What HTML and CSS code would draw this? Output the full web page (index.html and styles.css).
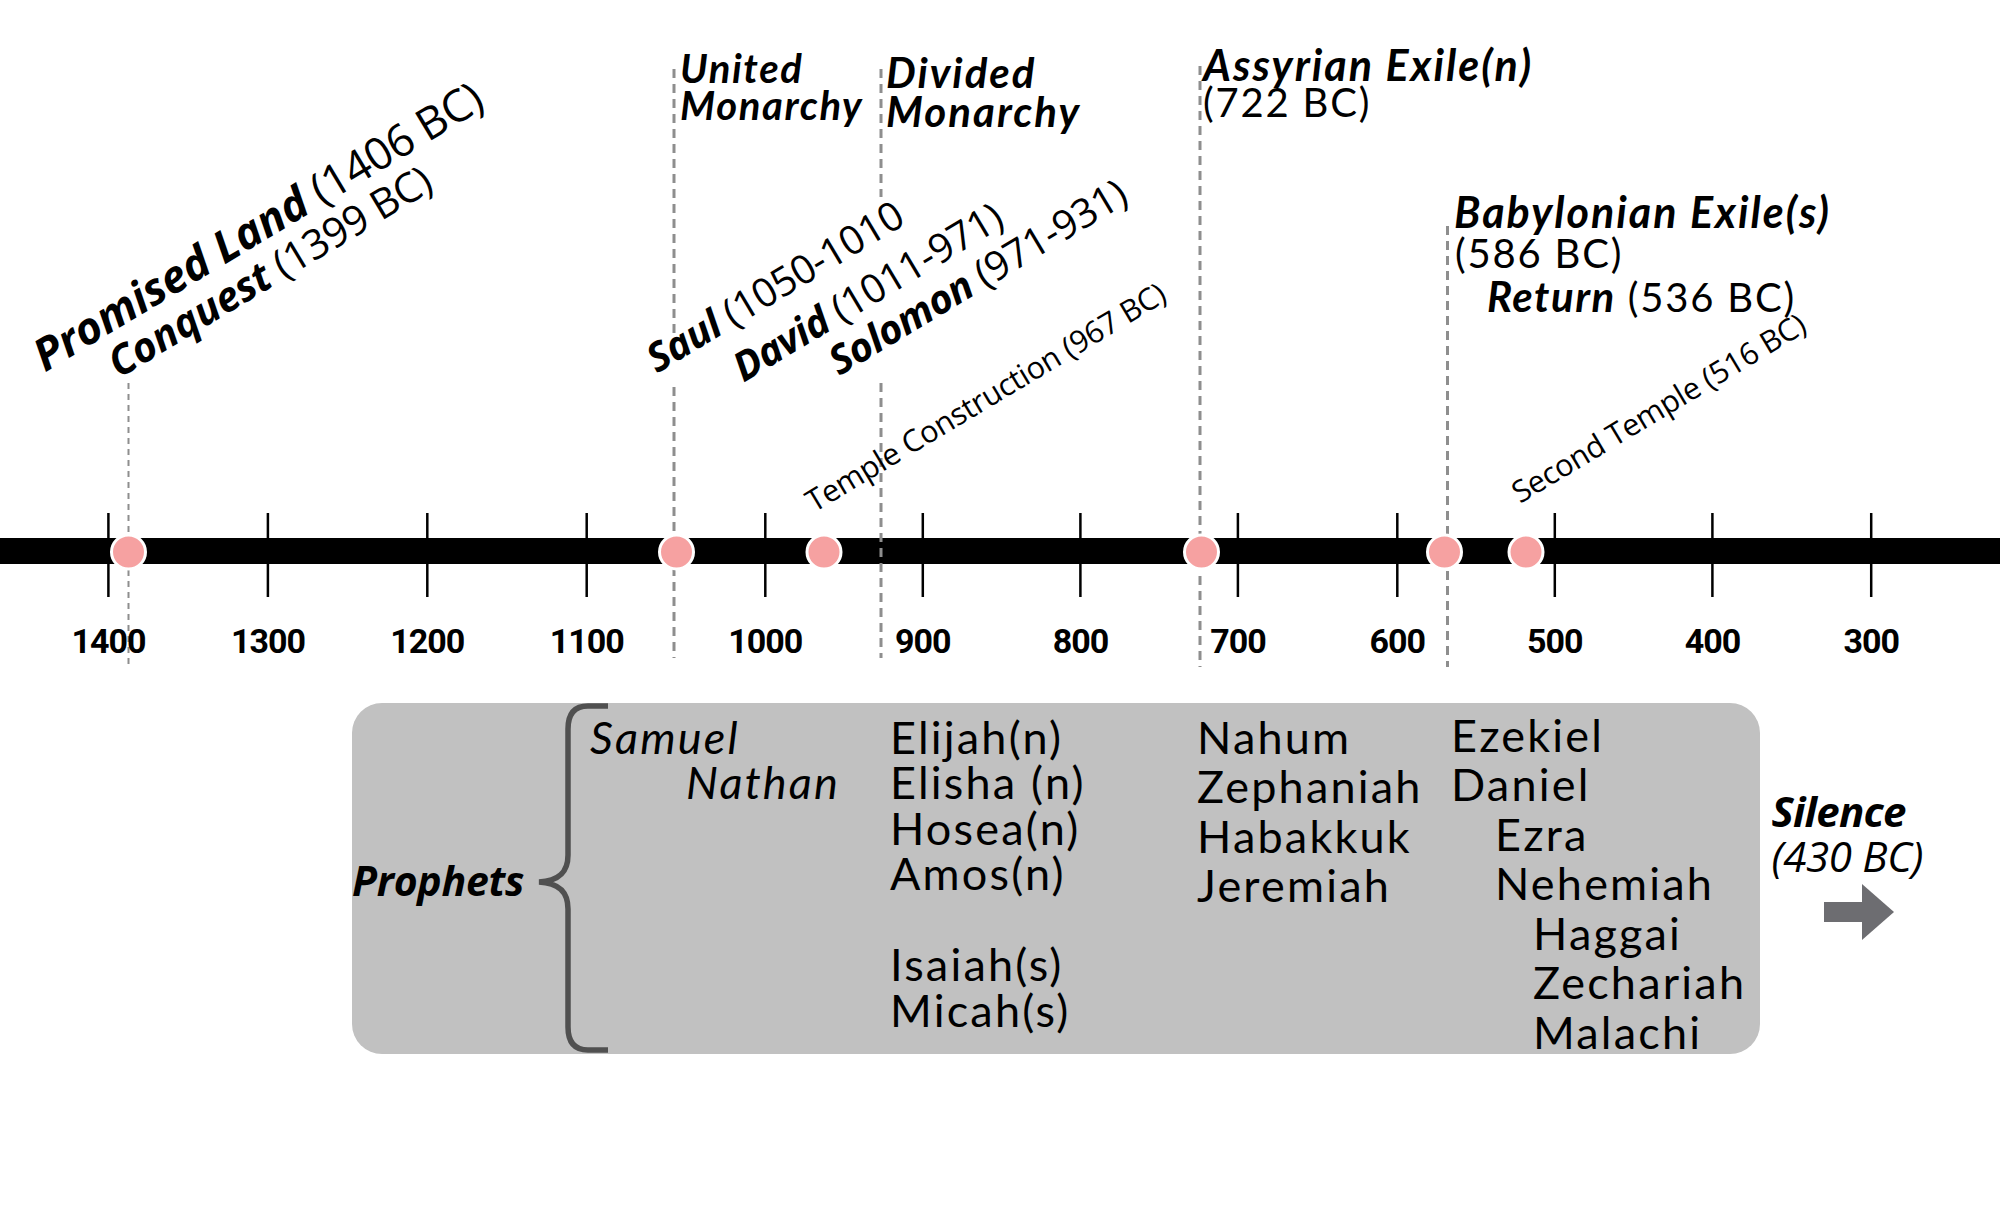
FILE: index.html
```html
<!DOCTYPE html>
<html lang="en">
<head>
<meta charset="utf-8">
<title>Old Testament Timeline</title>
<link rel="stylesheet" href="styles.css">
</head>
<body>
<main class="page">
  <svg class="chart" width="2000" height="703" viewBox="0 0 2000 703">
    <rect class="axis" x="0" y="538" width="2000" height="26"/>
    <g class="ticks">
      <line x1="108.4" y1="513" x2="108.4" y2="597"/>
      <line x1="267.9" y1="513" x2="267.9" y2="597"/>
      <line x1="427.3" y1="513" x2="427.3" y2="597"/>
      <line x1="586.7" y1="513" x2="586.7" y2="597"/>
      <line x1="765.3" y1="513" x2="765.3" y2="597"/>
      <line x1="922.8" y1="513" x2="922.8" y2="597"/>
      <line x1="1080.4" y1="513" x2="1080.4" y2="597"/>
      <line x1="1237.9" y1="513" x2="1237.9" y2="597"/>
      <line x1="1397.3" y1="513" x2="1397.3" y2="597"/>
      <line x1="1554.8" y1="513" x2="1554.8" y2="597"/>
      <line x1="1712.4" y1="513" x2="1712.4" y2="597"/>
      <line x1="1871.2" y1="513" x2="1871.2" y2="597"/>
    </g>
    <g class="guides">
      <line class="guide-thin" x1="128.5" y1="383" x2="128.5" y2="667"/>
      <line x1="674" y1="69" x2="674" y2="340"/>
      <line x1="674" y1="387" x2="674" y2="658"/>
      <line x1="881" y1="69" x2="881" y2="197"/>
      <line x1="881" y1="383" x2="881" y2="658"/>
      <line x1="1200" y1="66" x2="1200" y2="667"/>
      <line x1="1447.5" y1="226" x2="1447.5" y2="667"/>
    </g>
    <g class="dots">
      <circle cx="128.5" cy="552" r="17"/>
      <circle cx="676.5" cy="552" r="17"/>
      <circle cx="824" cy="552" r="17"/>
      <circle cx="1201.5" cy="552" r="17"/>
      <circle cx="1444.5" cy="552" r="17"/>
      <circle cx="1526" cy="552" r="17"/>
    </g>
    <g class="years">
      <text x="108.4" y="653">1400</text>
      <text x="267.9" y="653">1300</text>
      <text x="427.3" y="653">1200</text>
      <text x="586.7" y="653">1100</text>
      <text x="765.3" y="653">1000</text>
      <text x="922.8" y="653">900</text>
      <text x="1080.4" y="653">800</text>
      <text x="1237.9" y="653">700</text>
      <text x="1397.3" y="653">600</text>
      <text x="1554.8" y="653">500</text>
      <text x="1712.4" y="653">400</text>
      <text x="1871.2" y="653">300</text>
    </g>

    <g class="rotated">
      <text transform="translate(45 372.4) rotate(-31)"><tspan class="rb rb-p">Promised Land</tspan><tspan class="rl rl-p"> (1406 BC)</tspan></text>
      <text transform="translate(119 378.8) rotate(-31)"><tspan class="rb rb-c">Conquest</tspan><tspan class="rl rl-c"> (1399 BC)</tspan></text>
      <text transform="translate(657 373.7) rotate(-31)"><tspan class="rb rb-k">Saul</tspan><tspan class="rl rl-k"> (1050-1010</tspan></text>
      <text transform="translate(743.6 382.7) rotate(-31)"><tspan class="rb rb-k">David</tspan><tspan class="rl rl-k"> (1011-971)</tspan></text>
      <text transform="translate(839.3 376.3) rotate(-31)"><tspan class="rb rb-k">Solomon</tspan><tspan class="rl rl-k"> (971-931)</tspan></text>
      <text class="rt" transform="translate(814 513) rotate(-31)">Temple Construction (967 BC)</text>
      <text class="rt" transform="translate(1520 504) rotate(-31)">Second Temple (516 BC)</text>
    </g>

    <g class="headers">
      <text class="hd hd-sm" x="680" y="83">United</text>
      <text class="hd hd-sm" x="680" y="120">Monarchy</text>
      <text class="hd hd-md" x="886" y="88">Divided</text>
      <text class="hd hd-md" x="886" y="127">Monarchy</text>
      <text class="hd" x="1203" y="80.5">Assyrian Exile(n)</text>
      <text class="hd-date" x="1203" y="117">(722 BC)</text>
      <text class="hd" x="1454" y="228">Babylonian Exile(s)</text>
      <text class="hd-date" x="1455" y="268">(586 BC)</text>
      <text x="1487" y="312"><tspan class="hd hd-ret">Return</tspan><tspan class="hd-date"> (536 BC)</tspan></text>
    </g>
  </svg>

  <section class="prophets-row">
    <div class="prophets-box">
      <div class="prophets-label">Prophets</div>
      <svg class="brace" width="74" height="351" viewBox="0 0 74 351">
        <path d="M72 3 H52 Q32 3 32 26 V152 C32 170 22 178 3 179 C22 180 32 188 32 206 V324 Q32 347 52 347 H72"/>
      </svg>
      <div class="col col-1">
        <div class="name it">Samuel</div>
        <div class="name it indent-a">Nathan</div>
      </div>
      <div class="col col-2">
        <div class="name">Elijah(n)</div>
        <div class="name">Elisha (n)</div>
        <div class="name">Hosea(n)</div>
        <div class="name">Amos(n)</div>
        <div class="name spaced">Isaiah(s)</div>
        <div class="name">Micah(s)</div>
      </div>
      <div class="col col-3">
        <div class="name">Nahum</div>
        <div class="name">Zephaniah</div>
        <div class="name">Habakkuk</div>
        <div class="name">Jeremiah</div>
      </div>
      <div class="col col-4">
        <div class="name">Ezekiel</div>
        <div class="name">Daniel</div>
        <div class="name indent-b">Ezra</div>
        <div class="name indent-b">Nehemiah</div>
        <div class="name indent-c">Haggai</div>
        <div class="name indent-c">Zechariah</div>
        <div class="name indent-c">Malachi</div>
      </div>
    </div>
    <div class="silence">
      <div class="silence-title">Silence</div>
      <div class="silence-date">(430 BC)</div>
      <svg class="arrow" width="70" height="56" viewBox="0 0 70 56">
        <rect x="0" y="18" width="40" height="20"/>
        <polygon points="38,0 70,28 38,56"/>
      </svg>
    </div>
  </section>
</main>
</body>
</html>
```

FILE: styles.css
```css
html, body {
  margin: 0;
  padding: 0;
  background: #ffffff;
}

body {
  width: 2000px;
  height: 1214px;
  overflow: hidden;
  font-family: "Lato", "DejaVu Sans", sans-serif;
  color: #000000;
}

.page {
  width: 2000px;
}

/* ---------- timeline chart ---------- */
.chart {
  display: block;
}

.axis {
  fill: #000000;
}

.ticks line {
  stroke: #000000;
  stroke-width: 2.5;
}

.guides line {
  stroke: #8e8e8e;
  stroke-width: 3;
  stroke-dasharray: 9 6;
}

.guides .guide-thin {
  stroke-width: 2;
  stroke-dasharray: 6 5;
}

.dots circle {
  fill: #f6a1a1;
  stroke: #ffffff;
  stroke-width: 3;
}

.years text {
  font-family: "Roboto", "Liberation Sans", sans-serif;
  font-weight: 700;
  font-size: 34px;
  letter-spacing: -1px;
  text-anchor: middle;
  fill: #000000;
}

.rotated text {
  fill: #000000;
}

.rb {
  font-family: "Open Sans", "Liberation Sans", sans-serif;
  font-weight: 700;
  font-style: italic;
  font-size: 43.5px;
}

.rl {
  font-family: "Open Sans", "Liberation Sans", sans-serif;
  font-weight: 400;
  font-style: normal;
  font-size: 43.5px;
  letter-spacing: -0.5px;
}

.rb-p,
.rl-p {
  font-size: 44.5px;
}

.rb-c,
.rl-c {
  font-size: 41px;
}

.rb-k,
.rl-k {
  font-size: 40px;
  letter-spacing: -0.5px;
}

.rt {
  font-family: "Open Sans", "Liberation Sans", sans-serif;
  font-weight: 400;
  font-style: normal;
  font-size: 30.5px;
  letter-spacing: -0.3px;
}

.hd {
  font-family: "Lato", "DejaVu Sans", sans-serif;
  font-weight: 700;
  font-style: italic;
  font-size: 43px;
  letter-spacing: 2px;
  fill: #000000;
}

.hd-sm {
  font-size: 40px;
  letter-spacing: 1.6px;
}

.hd-md {
  font-size: 42px;
  letter-spacing: 2px;
}

.hd-ret {
  font-size: 42px;
  letter-spacing: 1.5px;
}

.hd-date {
  font-family: "Lato", "DejaVu Sans", sans-serif;
  font-weight: 400;
  font-style: normal;
  font-size: 40px;
  letter-spacing: 1.8px;
  fill: #000000;
}

/* ---------- prophets panel ---------- */
.prophets-row {
  display: flex;
  align-items: flex-start;
  padding-left: 352px;
}

.prophets-box {
  display: flex;
  align-items: flex-start;
  width: 1408px;
  height: 351px;
  box-sizing: border-box;
  background: #c1c1c1;
  border-radius: 30px;
  flex: none;
}

.prophets-label {
  align-self: center;
  width: 184px;
  flex: none;
  font-family: "Open Sans", "Liberation Sans", sans-serif;
  font-weight: 700;
  font-style: italic;
  font-size: 41px;
  line-height: 41px;
  letter-spacing: -0.3px;
  white-space: nowrap;
  position: relative;
  top: 2px;
}

.brace {
  display: block;
  flex: none;
  margin-right: -20px;
}

.brace path {
  fill: none;
  stroke: #505050;
  stroke-width: 5.5;
}

.col {
  flex: none;
  font-size: 45px;
  letter-spacing: 2.2px;
  white-space: nowrap;
}

.col-1 {
  width: 300px;
  padding-top: 11.85px;
  line-height: 45.5px;
}

.col-2 {
  width: 307px;
  padding-top: 11.85px;
  line-height: 45.5px;
}

.col-3 {
  width: 254px;
  padding-top: 9.95px;
  line-height: 49.3px;
}

.col-4 {
  padding-top: 7.85px;
  line-height: 49.5px;
}

.name.it {
  font-style: italic;
}

.indent-a {
  padding-left: 96px;
}

.indent-b {
  padding-left: 44px;
}

.indent-c {
  padding-left: 82px;
}

.spaced {
  margin-top: 45.5px;
}

/* ---------- silence ---------- */
.silence {
  display: flex;
  flex-direction: column;
  align-items: flex-start;
  margin-left: 11.5px;
  margin-top: 85px;
}

.silence-title {
  font-family: "Open Sans", "Liberation Sans", sans-serif;
  font-weight: 700;
  font-style: italic;
  font-size: 42px;
  line-height: 45px;
  letter-spacing: -0.8px;
}

.silence-date {
  font-family: "Open Sans", "Liberation Sans", sans-serif;
  font-weight: 400;
  font-style: italic;
  font-size: 42px;
  line-height: 45px;
  letter-spacing: -0.3px;
}

.arrow {
  display: block;
  margin-left: 52.5px;
  margin-top: 6px;
}

.arrow rect,
.arrow polygon {
  fill: #6d6d71;
}
```
